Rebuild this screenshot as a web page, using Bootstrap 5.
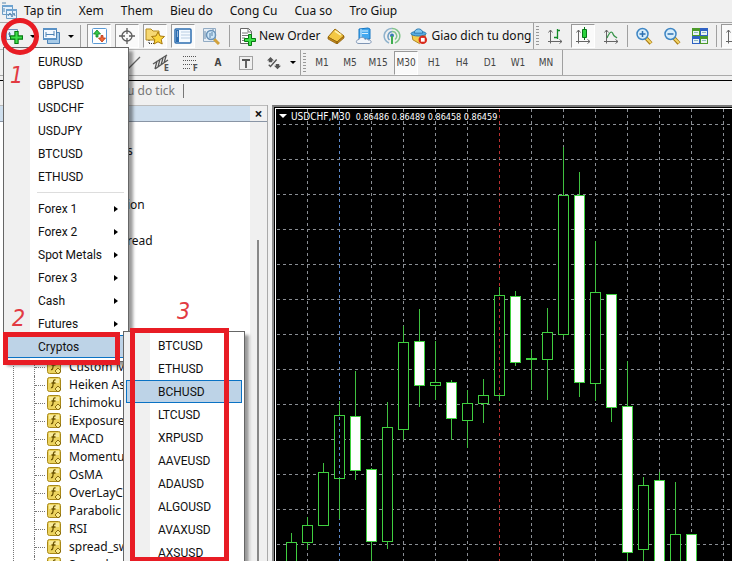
<!DOCTYPE html>
<html lang="vi">
<head>
<meta charset="utf-8">
<meta name="viewport" content="width=device-width, initial-scale=1">
<title>USDCHF,M30</title>
<link href="https://cdn.jsdelivr.net/npm/bootstrap@5.3.0/dist/css/bootstrap.min.css" rel="stylesheet">
<style>
:root{--ui:"Noto Sans","Open Sans",sans-serif;--tah:"DejaVu Sans Condensed","DejaVu Sans",sans-serif;--mark:#e81c24}
body{background:#f0f0f0;color:#111;font:12px/18px var(--ui)}
button{font:inherit;color:inherit;border:0;background:none;padding:0}
svg{display:block;flex:none}
.menubar{height:22px;gap:17px;padding-left:1px}
.menubar a{color:#111;text-decoration:none}
.menubar svg{margin-right:-11px}
.bar{border-top:1px solid #a8a8a8;white-space:nowrap;overflow:hidden}
.bar1{height:27px}
.bar2{height:27px;border-color:#b8b8b8;border-bottom:1px solid #aaa;font:10px/16px var(--tah);color:#444;padding-left:120px}
.tb{width:24px;height:24px;margin:0 2px;flex:none;display:flex;align-items:center;justify-content:center}
.on{background:#fafafa;border:1px solid #fff;border-top-color:#999;border-left-color:#999}
.drop{width:10px;height:24px;flex:none;display:flex;align-items:center;justify-content:center}
.drop::after{content:"";border:3px solid transparent;border-top-color:#000;border-bottom:0}
.vr1{width:1px;height:22px;background:#a0a0a0;margin:0 2px;flex:none}
.vr2{width:1px;height:28px;background:#a0a0a0;margin:0 2px;flex:none}
.grip{width:3px;height:20px;margin-right:2px;background:repeating-linear-gradient(#999 0 1px,#f0f0f0 1px 3px);flex:none}
.wide{gap:3px;flex:none;display:flex;align-items:center}
.tabs{height:25px;margin-top:4px;padding-bottom:5px;border-top:1px solid #000;color:#777;padding-left:127px}
.tabs span{border-right:1px solid #777;padding-right:8px;line-height:14px}
.navi{width:268px;border-right:1px solid #aaa}
.navi header{height:17px;background:#cfdfee;border-bottom:1px solid #8995a5;border-top:1px solid #bbb}
.navi header button{width:17px;height:15px;background:#f0f0f0;font-weight:700;font-size:14px;line-height:14px}
.tree{background:#fff;padding:0;margin:0;list-style:none;position:relative;overflow:hidden;padding-top:20px}
.tree::before{content:"";position:absolute;left:13px;top:0;bottom:0;border-left:1px dotted #777}
.tree li{height:18px;display:flex;align-items:center;white-space:nowrap}
.tree .part{padding-left:127px}
.tree .leaf{margin-left:34px;border-left:1px dotted #777}
.tree .leaf::before{content:"";width:10px;border-top:1px dotted #777;margin-right:2px}
.tree .leaf span{margin-left:7px}
.scrl{width:17px;background:#f0f0f0;padding:118px 8px 0 7px}
.scrl div{width:2px;height:100%;background:#888}
.chart{background:#000;border-top:2px solid #777;border-left:2px solid #888;margin-left:4px;position:relative;overflow:hidden}
.frame{border:1px solid #fff;border-width:1px 0 0 1px;margin:1px 0 0 1px}
.cap{position:absolute;left:5px;top:3px;z-index:2;color:#fff;font:10px/14px var(--tah);white-space:pre}
.cap span{font-size:9px}
.cap::before{content:"";display:inline-block;border:4px solid transparent;border-top-color:#fff;border-bottom:0;margin:0 4px 2px 0}
.pop{position:absolute;z-index:5;background:linear-gradient(90deg,#f0f0f0 26px,#fff 26px);border:1px solid #666;padding:2px;box-shadow:4px 4px 3px #0006;font-family:Roboto,"Noto Sans",sans-serif}
.pop button{display:flex;align-items:center;justify-content:space-between;width:100%;height:23px;padding:0 7px 0 31px;border:1px solid transparent;background-clip:padding-box;text-align:left;white-space:nowrap}
.pop .hot{background:#bdd3e7;border-color:#0a72c4}
.sub::after{content:"";border:3px solid transparent;border-left:4px solid #000;border-right:0}
.rule{height:1px;background:#ddd;margin:4px 2px 4px 31px}
.pop1{left:3px;top:47px;width:126px;height:315px}
.pop2{left:123px;top:331px;width:122px;height:240px;z-index:6}
.ring,.box1,.box2{position:absolute;z-index:8;border:5px solid var(--mark);pointer-events:none}
.ring{left:1px;top:18px;width:38px;height:37px;border-radius:50%}
.box1{left:3px;top:332px;width:117px;height:33px}
.box2{left:130px;top:328px;width:99px;height:234px}
.num{position:absolute;z-index:8;color:#e23a42;font:italic 23px/24px "Liberation Sans Narrow","DejaVu Sans Condensed",sans-serif}
.n1{left:10px;top:63px}.n2{left:12px;top:306px}.n3{left:177px;top:299px}
</style>
<script src="https://cdn.jsdelivr.net/npm/bootstrap@5.3.0/dist/js/bootstrap.bundle.min.js"></script>
</head>
<body class="d-flex flex-column vh-100 overflow-hidden position-relative">
<svg width="0" height="0" class="position-absolute">
<defs>
<symbol id="fx" viewBox="0 0 15 16"><rect x=".5" y=".5" width="13" height="14" rx="2" fill="#ecd35e" stroke="#a88818"/><path d="M2 2h10v4H2z" fill="#f8ea9a"/><path d="M8.500 3c-2-.5-2 1-2.300 3.500S5.800 11 4 10.500M4.500 6h4" fill="none" stroke="#6b5200" stroke-width="1.300"/><path d="M11 9l3 3-3 3-3-3z" fill="#f9e98a" stroke="#8a6c10"/></symbol>
<symbol id="axes" viewBox="0 0 18 18"><path d="M4.500 3v13.500M2 14.500h14M2.500 5.500l2-2.500 2 2.500M13.500 12.500l2.500 2-2.500 2" fill="none" stroke="#666"/></symbol>
<symbol id="plus" viewBox="0 0 12 12"><path d="M4.500.5h3v4h4v3h-4v4h-3v-4h-4v-3h4z" fill="#3fe04a" stroke="#067a10"/></symbol>
</defs>
</svg>

<nav class="menubar d-flex align-items-center flex-shrink-0">
<svg width="17" height="18" viewBox="0 0 17 18"><path d="M1.500 3.500h10v9h-10zM5.500 7.500h10v9h-10z" fill="#e6f1fb" stroke="#6c9cc4"/><path d="M1 4h11M5 8h11" stroke="#6fa3d0" stroke-width="2"/><path d="M7 14l2-3 2 4 2-4 1 3M3 6v4M1 1h4" fill="none" stroke="#5788b0"/></svg>
<a href="#">Tap tin</a><a href="#">Xem</a><a href="#">Them</a><a href="#">Bieu do</a><a href="#">Cong Cu</a><a href="#">Cua so</a><a href="#">Tro Giup</a>
</nav>

<div class="bar bar1 d-flex align-items-center flex-shrink-0">
<button class="tb" aria-label="New chart"><svg width="20" height="18" viewBox="0 0 20 18"><path d="M2.500 2.500h11v10h-11z" fill="#e3effa" stroke="#6b93ba"/><path d="M5.500 5v5M4 7h3" stroke="#4d7ba5"/><use href="#plus" x="6" y="4" width="13" height="13"/></svg></button><button class="drop" aria-label="Chart list"></button>
<button class="tb" aria-label="Profiles"><svg width="20" height="18" viewBox="0 0 20 18"><path d="M5.500 5.500h12v11h-12z" fill="#a8cbe8" stroke="#4f83b5"/><path d="M1.500 1.500h13v11h-13z" fill="#f4f9ff" stroke="#4f83b5"/><path d="M1 2h14M1 12h14" stroke="#5a92c6" stroke-width="2"/><path d="M4 5v5M12 4v5M4 7.500h8" stroke="#4f83b5"/></svg></button><button class="drop" aria-label="Profile list"></button>
<div class="vr1 mx-1"></div>
<button class="tb on" aria-label="Market watch"><svg width="17" height="18" viewBox="0 0 17 18"><rect x="1.500" y="1.500" width="14" height="15" rx="1" fill="#fff" stroke="#5a9ad5"/><path d="M6 3L2.500 7H5v3h2V7h2.500z" fill="#35c94a" stroke="#12821f" stroke-width=".8"/><path d="M11 15l-3.500-4H10V8.500h2V11h2.500z" fill="#f06a35" stroke="#b83410" stroke-width=".8"/></svg></button>
<button class="tb on" aria-label="Data window"><svg width="18" height="18" viewBox="0 0 18 18"><g fill="none" stroke="#5e5e5e" stroke-width="1.300"><circle cx="9" cy="9" r="5"/><path d="M9 1v6M9 11v6M1 9h6M11 9h6"/></g></svg></button>
<button class="tb on" aria-label="Navigator"><svg width="20" height="18" viewBox="0 0 20 18"><path d="M1 2h5l2 2h6v9H1z" fill="#f6d873" stroke="#b38a1e"/><path d="M4 13v4M4 16.500h5" stroke="#333" stroke-dasharray="1 1"/><path d="M13 5l2 4 4.500.5-3.300 3 1 4.500-4.200-2.200L9 17l.8-4.500-3.300-3L11 9z" fill="#fbd53c" stroke="#a8790c"/></svg></button>
<button class="tb on" aria-label="Terminal"><svg width="18" height="16" viewBox="0 0 18 16"><rect x="1" y="1" width="16" height="14" rx="1" fill="#f5faff" stroke="#2d6db0" stroke-width="1.500"/><path d="M2 2h3v12H2z" fill="#2d6db0"/><path d="M7 4h9M7 7h9M7 10h9" stroke="#b9cde2"/><path d="M3 4h1M3 6h1M3 8h1" stroke="#fff"/></svg></button>
<button class="tb" aria-label="Strategy tester"><svg width="18" height="18" viewBox="0 0 18 18"><path d="M1.500 1.500h12v13h-12z" fill="#e6eef6" stroke="#92abc3"/><path d="M3 4v8M11 2v3" stroke="#6a8cab"/><path d="M12 12l5 5" stroke="#d2a23c" stroke-width="3"/><circle cx="9" cy="8" r="4.500" fill="#cde6f8" stroke="#6a93b8" stroke-width="1.500"/><path d="M8 6v5M10 5v4" stroke="#5a83a8"/></svg></button>
<div class="vr1 mx-1"></div>
<button class="wide ps-1"><svg width="18" height="19" viewBox="0 0 18 19"><path d="M2.500 1.500h8l3 3v12h-11z" fill="#fff" stroke="#666"/><path d="M10 1v4h4M4 6h6M4 8.500h6M4 11h3M4 13.500h3" fill="none" stroke="#777"/><use href="#plus" x="6" y="7" width="12" height="12"/></svg><span>New Order</span></button>
<button class="tb ms-1" aria-label="MetaEditor"><svg width="18" height="16" viewBox="0 0 18 16"><path d="M1 9l7-8 9 7-7 6z" fill="#f4c843" stroke="#9a6b0c"/><path d="M1 9v2l9 5v-2zM10 16l7-6V8l-7 6z" fill="#c48a1c" stroke="#8a5c08" stroke-width=".7"/><path d="M8 3l6 4" stroke="#fff0a8" stroke-width="2"/></svg></button>
<button class="tb" aria-label="Virtual hosting"><svg width="18" height="18" viewBox="0 0 18 18"><path d="M4 2l9-1 2 1v10H4z" fill="#43a8ef" stroke="#1576c3"/><path d="M7 4h6M7 6.500h6M6 2v9" stroke="#d8f0ff"/><path d="M4 16.500c-4 0-3-4 0-4 1-3 5-3 6 0 1-1 3-1 3 .5 4-.5 4 3.500 1 3.500z" fill="#f1f5fa" stroke="#7f95b4"/></svg></button>
<button class="tb" aria-label="Signals"><svg width="18" height="18" viewBox="0 0 18 18"><g fill="none" stroke-width="1.500"><path d="M6 16A7.500 7.500 0 0 1 9 1.500" stroke="#8fb2cc"/><path d="M6.500 13A5 5 0 0 1 9 4.500" stroke="#6f9fc4"/><path d="M9 1.500A7.500 7.500 0 0 1 12 16M9 4.500a4.500 4.500 0 0 1 3 8" stroke="#82c48b"/></g><circle cx="9" cy="8.500" r="2" fill="#3a7ab5"/><path d="M9 9v8" stroke="#3fae50" stroke-width="2"/></svg></button>
<button class="wide ms-1"><svg width="18" height="18" viewBox="0 0 19 18"><path d="M2 7l1 6 7 4 6-5V7z" fill="#f3ce4e" stroke="#ad8119"/><ellipse cx="9" cy="6.500" rx="8" ry="2.500" fill="#58aee3" stroke="#2876ad"/><path d="M4.500 6c0-6 9-6 9 0z" fill="#80c8f0" stroke="#2876ad"/><circle cx="13.500" cy="13" r="4.500" fill="#d9291b"/><path d="M11.500 11h4v4h-4z" fill="#fff"/></svg><span>Giao dich tu dong</span></button>
<div class="vr2"></div><div class="grip"></div>
<button class="tb" aria-label="Bar chart"><svg width="18" height="18"><use href="#axes"/><path d="M11.500 2v10M11 3.500h3M8 10.500h3" stroke="#128a28" stroke-width="1.300"/></svg></button>
<button class="tb on" aria-label="Candlesticks"><svg width="18" height="18"><use href="#axes"/><path d="M10.500 0v13" stroke="#087818"/><path d="M8.500 2.500h4v8h-4z" fill="#2bd23d" stroke="#087818"/></svg></button>
<button class="tb" aria-label="Line chart"><svg width="18" height="18"><use href="#axes"/><path d="M5 11c3-7 5-7 6-4s2 2 4 4" fill="none" stroke="#38944a" stroke-width="1.300"/></svg></button>
<div class="vr1"></div>
<button class="tb" aria-label="Zoom in"><svg width="18" height="18" viewBox="0 0 18 18"><path d="M11 11l5 5.500" stroke="#a97a12" stroke-width="4"/><path d="M11 11l5 5" stroke="#f3d568" stroke-width="2"/><circle cx="7.500" cy="7" r="5.500" fill="#d7edfb" stroke="#3f86c4" stroke-width="1.500"/><path d="M4.500 7h6M7.500 4v6" stroke="#2d6fb0" stroke-width="1.500"/></svg></button>
<button class="tb" aria-label="Zoom out"><svg width="18" height="18" viewBox="0 0 18 18"><path d="M11 11l5 5.500" stroke="#a97a12" stroke-width="4"/><path d="M11 11l5 5" stroke="#f3d568" stroke-width="2"/><circle cx="7.500" cy="7" r="5.500" fill="#d7edfb" stroke="#3f86c4" stroke-width="1.500"/><path d="M4.500 7h6" stroke="#2d6fb0" stroke-width="1.500"/></svg></button>
<button class="tb" aria-label="Tile windows"><svg width="18" height="18" viewBox="0 0 18 18"><path d="M1 1h8v8H1zM9 9h8v8H9z" fill="#4c9a2a"/><path d="M9 1h8v8H9zM1 9h8v8H1z" fill="#2f62c4"/><path d="M2 4h6v4H2zM10 4h6v4h-6zM2 12h6v4H2zM10 12h6v4h-6z" fill="#e9f3f4"/><path d="M3 5.500h4M11 5.500h4M3 13.500h4M11 13.500h4" stroke="#8fb8c0"/></svg></button>
<div class="vr1"></div>
<button class="tb on" aria-label="Auto scroll"><svg width="18" height="18"><use href="#axes"/></svg></button>
</div>

<div class="bar bar2 d-flex align-items-center flex-shrink-0">
<button class="tb" aria-label="Trend line"><svg width="18" height="18"><path d="M3 15L15 3" stroke="#666" stroke-width="1.300"/></svg></button>
<button class="tb" aria-label="Channel"><svg width="20" height="18" viewBox="0 0 20 18"><path d="M1 10L15 1M3 15L16 6M5 7l-2 8M8 5l-2 8M11 4L9 11M14 2l-2 7" stroke="#555" stroke-width="1.300"/><text x="12" y="17" font-size="8" font-weight="700" fill="#555">E</text></svg></button>
<button class="tb" aria-label="Fibonacci"><svg width="19" height="18" viewBox="0 0 19 18"><path d="M2 2.500h14M2 6.500h14M2 10.500h14M2 14.500h8" stroke="#555" stroke-dasharray="1 1"/><text x="12" y="17" font-size="8" font-weight="700" fill="#555">F</text></svg></button>
<button class="tb fw-bold">A</button>
<button class="tb" aria-label="Text label"><svg width="18" height="18" viewBox="0 0 18 18"><rect x="2.500" y="2.500" width="13" height="13" fill="none" stroke="#555" stroke-dasharray="1 1"/><path d="M5 6h8M9 6v8" stroke="#555" stroke-width="1.800"/></svg></button>
<button class="tb" aria-label="Arrows"><svg width="16" height="14" viewBox="0 0 18 16"><path d="M5 1l4 4H7v2H3V5H1zM13 15l-4-4h2V9h4v2h2z" fill="#555"/><path d="M3 10l2 2 7-8" fill="none" stroke="#555" stroke-width="1.500"/></svg></button><button class="drop" aria-label="Arrow list"></button>
<div class="vr2"></div><div class="grip"></div>
<button class="tb">M1</button><button class="tb">M5</button><button class="tb">M15</button><button class="tb on">M30</button><button class="tb">H1</button><button class="tb">H4</button><button class="tb">D1</button><button class="tb">W1</button><button class="tb">MN</button>
<div class="vr2"></div>
</div>
<div class="tabs d-flex align-items-center flex-shrink-0"><span>u do tick</span></div>

<main class="d-flex flex-grow-1 overflow-hidden">
<aside class="navi d-flex flex-column flex-shrink-0">
<header class="d-flex justify-content-end flex-shrink-0"><button aria-label="Close">×</button></header>
<div class="d-flex flex-grow-1 overflow-hidden">
<ul class="tree flex-grow-1">
<li class="part">s</li><li></li><li></li><li class="part">ion</li><li></li><li class="part">read</li><li></li><li></li><li></li><li></li><li></li><li></li>
<li class="leaf"><svg width="15" height="16"><use href="#fx"/></svg><span>Custom M</span></li>
<li class="leaf"><svg width="15" height="16"><use href="#fx"/></svg><span>Heiken As</span></li>
<li class="leaf"><svg width="15" height="16"><use href="#fx"/></svg><span>Ichimoku</span></li>
<li class="leaf"><svg width="15" height="16"><use href="#fx"/></svg><span>iExposure</span></li>
<li class="leaf"><svg width="15" height="16"><use href="#fx"/></svg><span>MACD</span></li>
<li class="leaf"><svg width="15" height="16"><use href="#fx"/></svg><span>Momentu</span></li>
<li class="leaf"><svg width="15" height="16"><use href="#fx"/></svg><span>OsMA</span></li>
<li class="leaf"><svg width="15" height="16"><use href="#fx"/></svg><span>OverLayCh</span></li>
<li class="leaf"><svg width="15" height="16"><use href="#fx"/></svg><span>Parabolic</span></li>
<li class="leaf"><svg width="15" height="16"><use href="#fx"/></svg><span>RSI</span></li>
<li class="leaf"><svg width="15" height="16"><use href="#fx"/></svg><span>spread_sw</span></li>
<li class="leaf"><svg width="15" height="16"><use href="#fx"/></svg><span>Spread_</span></li>
</ul>
<div class="scrl"><div></div></div>
</div>
</aside>
<section class="chart flex-grow-1">
<div class="cap">USDCHF,M30<span>  0.86486 0.86489 0.86458 0.86459</span></div>
<div class="frame h-100"><svg id="plot" width="100%" height="100%" shape-rendering="crispEdges"></svg></div>
</section>
</main>

<div class="pop pop1">
<button>EURUSD</button><button>GBPUSD</button><button>USDCHF</button><button>USDJPY</button><button>BTCUSD</button><button>ETHUSD</button>
<div class="rule"></div>
<button class="sub">Forex 1</button><button class="sub">Forex 2</button><button class="sub">Spot Metals</button><button class="sub">Forex 3</button><button class="sub">Cash</button><button class="sub">Futures</button><button class="hot">Cryptos</button>
</div>
<div class="pop pop2">
<button>BTCUSD</button><button>ETHUSD</button><button class="hot">BCHUSD</button><button>LTCUSD</button><button>XRPUSD</button><button>AAVEUSD</button><button>ADAUSD</button><button>ALGOUSD</button><button>AVAXUSD</button><button>AXSUSD</button>
</div>
<div class="ring"></div><div class="box1"></div><div class="box2"></div>
<span class="num n1">1</span><span class="num n2">2</span><span class="num n3">3</span>

<script>
// Candles: body top, body bottom, wick top, wick bottom, falling flag; one every 16px
const bars=[[433,480,424,480,0],[416,433,408,440,0],[363,416,354,417,0],[306,369,292,410,0],[307,361,262,371,1],[360,432,359,470,1],[318,432,293,440,0],[233,320,217,331,0],[232,276,200,298,1],[273,276,232,291,0],[273,309,271,331,1],[294,311,281,339,0],[286,294,270,314,0],[186,286,178,292,0],[187,253,182,257,1],[249,250,241,281,0],[223,250,199,291,0],[86,225,38,228,0],[86,273,63,288,1],[183,274,132,292,0],[185,298,185,313,1],[297,443,252,470,1],[376,440,368,470,0],[371,480,363,480,1],[425,480,373,480,0],[425,480,425,480,1]];
const r=(x,y,w,h,f,s)=>`<rect x="${x}" y="${y}" width="${w}" height="${h}" fill="${f}"${s?` stroke="${s}"`:''}/>`;
const line=(x1,y1,x2,y2,c)=>`<line x1="${x1}" y1="${y1}" x2="${x2}" y2="${y2}" stroke="${c}" stroke-dasharray="3 3"/>`;
let out='';
for(let i=0;i<60;i++){const x=31.5+i*32;out+=line(x,0,x,1500,i==1?'#5c88c8':i==6?'#b83030':'#8a8e94')}
for(let i=0;i<40;i++){const y=15.5+i*35;out+=line(1,y,2400,y,'#8a8e94')}
bars.forEach(([t,b,wt,wb,f],i)=>{const x=15+i*16;
 out+=r(x,wt,1,wb-wt,'#3fc03f')+r(x-4.5,t+.5,10,b-t,f?'#fff':'#000','#3fd03f');
 if(i==3||i==13)out+=line(x+.5,t+2,x+.5,b,i==3?'#5c88c8':'#b83030')});
document.getElementById('plot').innerHTML=out;
</script>
</body>
</html>
